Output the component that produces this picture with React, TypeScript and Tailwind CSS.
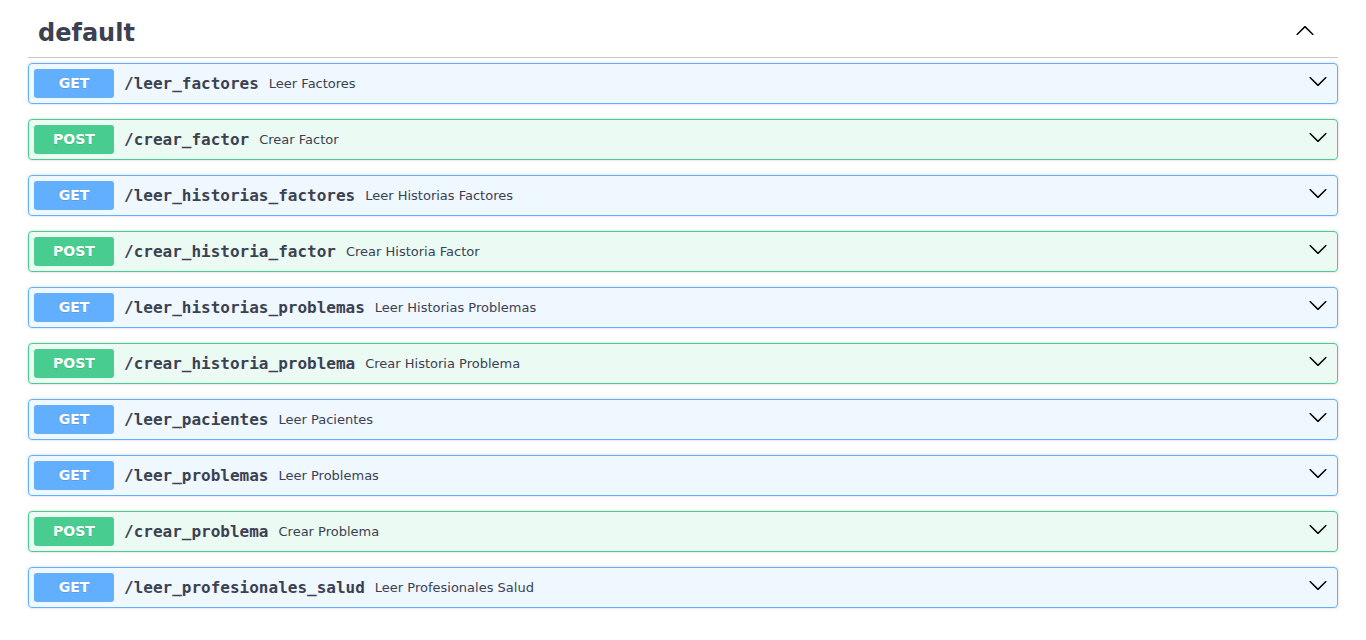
const ops = [
  { method: "GET", path: "/leer_factores", summary: "Leer Factores" },
  { method: "POST", path: "/crear_factor", summary: "Crear Factor" },
  { method: "GET", path: "/leer_historias_factores", summary: "Leer Historias Factores" },
  { method: "POST", path: "/crear_historia_factor", summary: "Crear Historia Factor" },
  { method: "GET", path: "/leer_historias_problemas", summary: "Leer Historias Problemas" },
  { method: "POST", path: "/crear_historia_problema", summary: "Crear Historia Problema" },
  { method: "GET", path: "/leer_pacientes", summary: "Leer Pacientes" },
  { method: "GET", path: "/leer_problemas", summary: "Leer Problemas" },
  { method: "POST", path: "/crear_problema", summary: "Crear Problema" },
  { method: "GET", path: "/leer_profesionales_salud", summary: "Leer Profesionales Salud" },
];

function Arrow({ up = false }: { up?: boolean }) {
  return (
    <svg
      width="20"
      height="20"
      viewBox="0 0 20 20"
      className={up ? "rotate-180" : ""}
      fill="#000"
    >
      <path d="M17.418 6.109c.272-.268.709-.268.979 0s.271.701 0 .969l-7.908 7.83c-.27.268-.707.268-.979 0l-7.908-7.83c-.27-.268-.27-.701 0-.969.271-.268.709-.268.979 0L10 13.25l7.418-7.141z" />
    </svg>
  );
}

function Operation({ method, path, summary }: { method: string; path: string; summary: string }) {
  const isGet = method === "GET";
  return (
    <div
      className={`mb-[15px] flex items-center rounded-[4px] border p-[5px] shadow-[0_0_3px_rgba(0,0,0,0.19)] ${
        isGet ? "border-[#61affe] bg-[#61affe]/10" : "border-[#49cc90] bg-[#49cc90]/10"
      }`}
    >
      <span
        className={`min-w-[80px] rounded-[3px] py-[6px] text-center text-[14px] font-bold leading-[17px] text-white [text-shadow:0_1px_0_rgba(0,0,0,0.1)] ${
          isGet ? "bg-[#61affe]" : "bg-[#49cc90]"
        }`}
      >
        {method}
      </span>
      <span className="px-[10px] font-['DejaVu_Sans_Mono',monospace] text-[16px] font-bold text-[#3b4151]">
        {path}
      </span>
      <span className="flex-1 text-[13px] text-[#3b4151]">{summary}</span>
      <span className="mb-[5px] flex pl-[10px] pr-[4px]">
        <Arrow />
      </span>
    </div>
  );
}

export default function App() {
  return (
    <div className="min-h-screen bg-white px-[28px] font-['DejaVu_Sans',sans-serif]">
      <div className="mb-[5px] flex h-[58px] items-center border-b border-[#3b4151]/30 pl-[10px] pr-[23px] pt-[8px]">
        <h3 className="flex-1 text-[24px] font-bold text-[#3b4151]">default</h3>
        <span className="mb-[3px] flex">
          <Arrow up />
        </span>
      </div>
      {ops.map((op) => (
        <Operation key={op.path} {...op} />
      ))}
    </div>
  );
}
